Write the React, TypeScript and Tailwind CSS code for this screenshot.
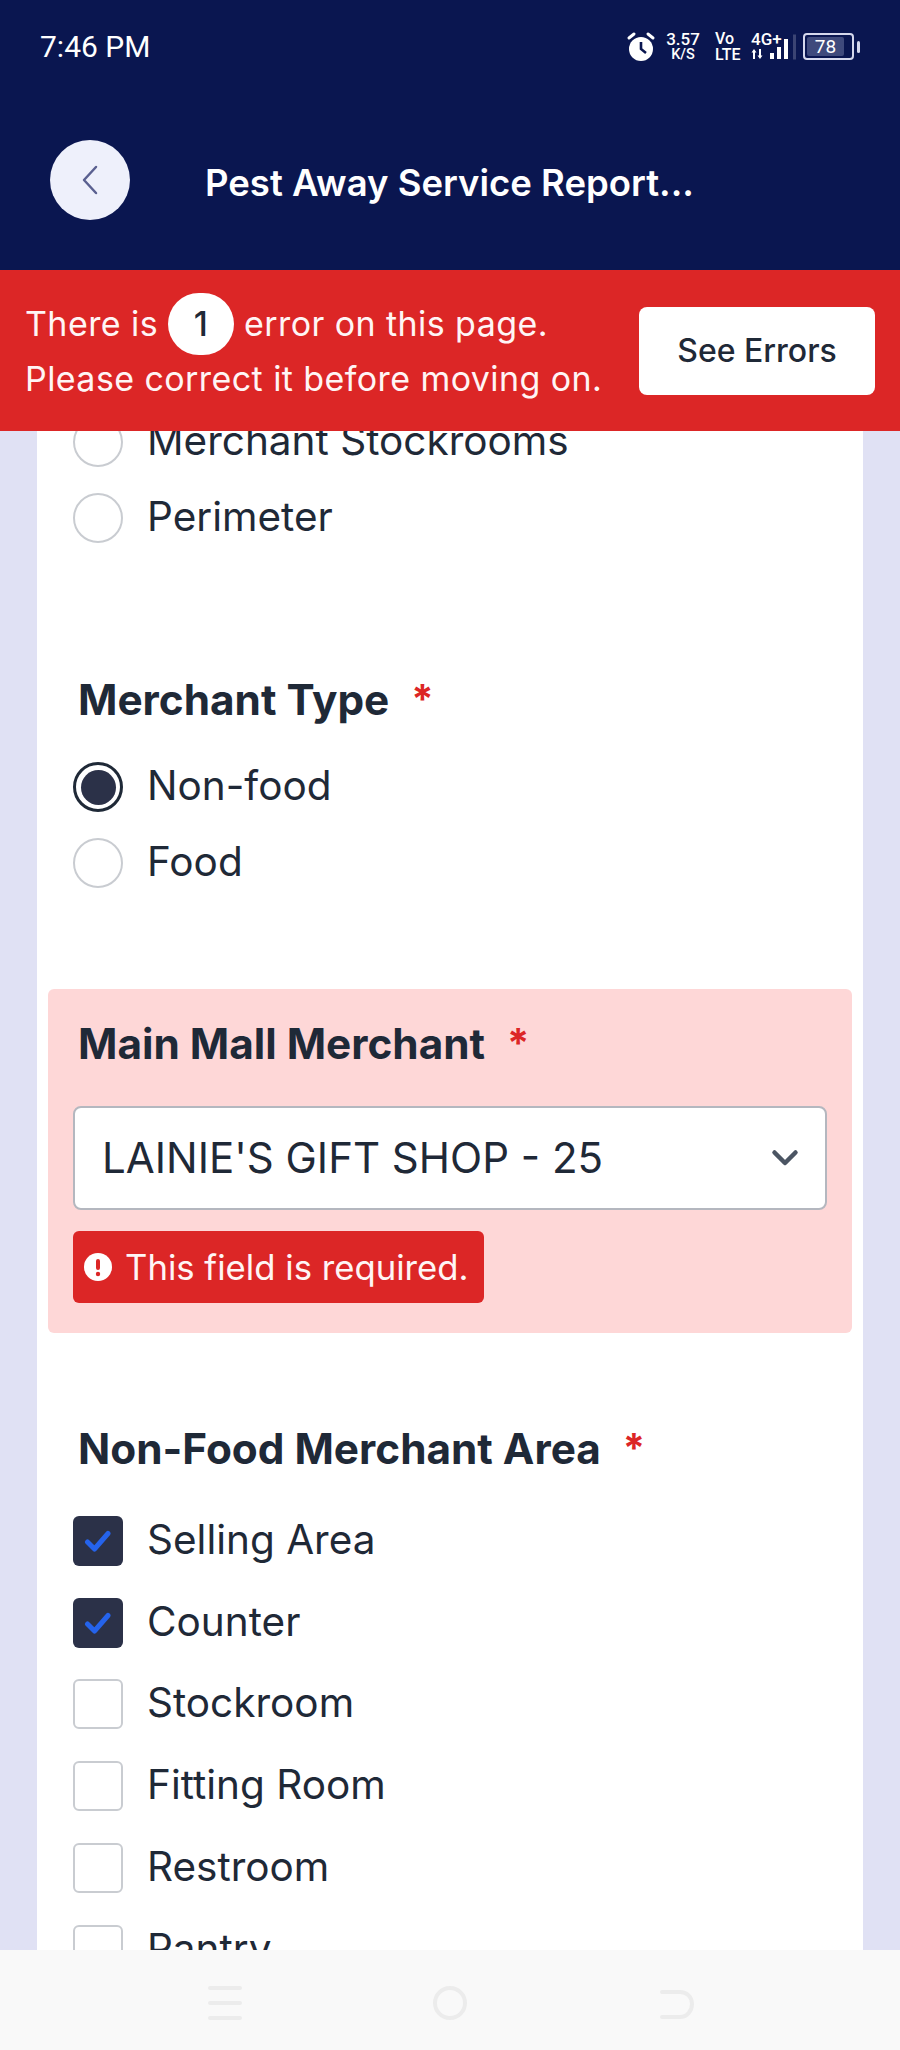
const RADIOS_TOP = ["Merchant Stockrooms", "Perimeter"];
const AREAS = [
  { label: "Selling Area", checked: true },
  { label: "Counter", checked: true },
  { label: "Stockroom", checked: false },
  { label: "Fitting Room", checked: false },
  { label: "Restroom", checked: false },
  { label: "Pantry", checked: false },
];

function Radio({ label, checked = false }: { label: string; checked?: boolean }) {
  return (
    <div className="flex h-[76px] items-center">
      {checked ? (
        <span className="flex h-[50px] w-[50px] items-center justify-center rounded-full border-[3px] border-[#1f2937] bg-white">
          <span className="h-[35px] w-[35px] rounded-full bg-[#2b3148]" />
        </span>
      ) : (
        <span className="h-[50px] w-[50px] rounded-full border-2 border-[#c9ccd1] bg-white" />
      )}
      <span className="ml-[24px] pb-[2px] text-[40.5px] leading-[60px] text-[#1f2937]">{label}</span>
    </div>
  );
}

function Check({ label, checked }: { label: string; checked: boolean }) {
  return (
    <div className="flex h-[81.75px] items-center">
      {checked ? (
        <span className="flex h-[50px] w-[50px] items-center justify-center rounded-[6px] bg-[#2b3148]">
          <svg width="28" height="24" viewBox="0 0 28 24" fill="none">
            <path d="M3.5 13 L10.5 20 L24 4.5" stroke="#2563eb" strokeWidth="5" strokeLinecap="round" strokeLinejoin="round" />
          </svg>
        </span>
      ) : (
        <span className="h-[50px] w-[50px] rounded-[6px] border-2 border-[#c9ccd1] bg-white" />
      )}
      <span className="ml-[24px] pb-[2px] text-[40.5px] leading-[60px] text-[#1f2937]">{label}</span>
    </div>
  );
}

function FieldLabel({ text }: { text: string }) {
  return (
    <div className="flex h-[60px] items-center text-[42.3px] font-bold leading-[60px] text-[#1f2937]">
      {text}
      <span className="ml-[22px] -translate-y-[1px] text-[40px] text-[#dc2626]">*</span>
    </div>
  );
}

function StatusBar() {
  return (
    <div className="flex h-[92px] items-center justify-between pl-[40px] pr-[40px] pt-[1px] font-['Roboto',sans-serif] text-white">
      <span className="text-[30px] leading-none">7:46 PM</span>
      <div className="flex items-center">
        <svg width="30" height="32" viewBox="0 0 30 32" fill="none">
          <circle cx="15" cy="18" r="12" fill="#fff" />
          <path d="M15 11 V18 L20 22" stroke="#0a1650" strokeWidth="2.6" fill="none" />
          <path d="M3 7 L8 3 M27 7 L22 3" stroke="#fff" strokeWidth="3" strokeLinecap="round" />
        </svg>
        <div className="ml-[11px] flex w-[32px] flex-col items-center text-[17px] font-medium leading-[16px]">
          <span>3.57</span>
          <span className="text-[14.5px]">K/S</span>
        </div>
        <div className="ml-[16px] flex w-[24px] flex-col items-start text-[16px] font-medium leading-[16px]">
          <span>Vo</span>
          <span>LTE</span>
        </div>
        <div className="relative ml-[12px] h-[36px] w-[42px]">
          <span className="absolute left-0 top-[1px] text-[17px] font-medium leading-[18px]">4G+</span>
          <svg className="absolute left-0 top-0" width="42" height="36" viewBox="0 0 42 36" fill="#fff">
            <path d="M3 20 L5.5 23.5 H4 V30 H2 V23.5 H0.5 Z" />
            <path d="M8 20 H10 V26.5 H11.5 L9 30 L6.5 26.5 H8 Z" />
            <rect x="19" y="24" width="4" height="6" />
            <rect x="26" y="18" width="4" height="12" />
            <rect x="33" y="10" width="4" height="20" />
          </svg>
        </div>
        <span className="h-[25px] w-[3px] translate-y-[0.5px] bg-[#3b4473]" />
        <div className="ml-[7px] flex h-[27px] w-[51px] items-center rounded-[4px] border-2 border-[#d5d8ec] p-[2px]">
          <span className="flex h-full w-[37px] items-center justify-center rounded-[2px] bg-[#3f4a7c] text-[19px] leading-none">78</span>
        </div>
        <span className="ml-[3px] h-[12px] w-[3px] rounded-sm bg-[#d5d8ec]" />
      </div>
    </div>
  );
}

export default function App() {
  return (
    <div className="flex h-[2050px] w-[900px] flex-col overflow-hidden bg-[#e0e1f4] font-['Inter',sans-serif]">
      <header className="h-[270px] shrink-0 bg-[#0a1650]">
        <StatusBar />
        <div className="mt-[48px] flex items-center pl-[50px]">
          <button type="button" className="flex h-[80px] w-[80px] items-center justify-center rounded-full bg-[#eef0fb]">
            <svg width="20" height="32" viewBox="0 0 20 32" fill="none">
              <path d="M16 3 L4 16 L16 29" stroke="#5a6090" strokeWidth="2.5" strokeLinecap="round" strokeLinejoin="round" />
            </svg>
          </button>
          <h1 className="ml-[75px] mt-[7px] whitespace-nowrap text-[36.5px] font-semibold leading-none text-white">Pest Away Service Report...</h1>
        </div>
      </header>

      <div className="flex h-[161px] shrink-0 items-center justify-between bg-[#dc2626] pl-[25px] pr-[25px]">
        <div className="-mt-[2px] text-[34px] tracking-[0.42px] text-[#fff5f5]">
          <div className="flex h-[62px] items-center">
            There is
            <span className="mx-[10px] flex h-[62px] w-[66px] items-center justify-center rounded-full bg-white font-medium text-[#1f2937]">1</span>
            error on this page.
          </div>
          <div className="mt-[-4px] h-[56px] leading-[56px]">Please correct it before moving on.</div>
        </div>
        <button type="button" className="flex h-[88px] w-[236px] items-center justify-center rounded-[8px] bg-white text-[32px] font-medium text-[#1f2937]">
          See Errors
        </button>
      </div>

      <main className="min-h-0 flex-1 overflow-hidden px-[37px]">
        <div className="-mt-[27px] bg-white pb-[40px]">
          <div className="px-[36px]">
            {RADIOS_TOP.map((label) => (
              <Radio key={label} label={label} />
            ))}
          </div>

          <div className="mt-[114px] pl-[41px] pr-[42px]">
            <FieldLabel text="Merchant Type" />
          </div>
          <div className="mt-[19px] px-[36px]">
            <Radio label="Non-food" checked />
            <Radio label="Food" />
          </div>

          <section className="mx-[11px] mt-[88px] rounded-[6px] bg-[#fed7d7] pb-[30px] pl-[25px] pr-[25px] pt-[25px]">
            <div className="pl-[5px]">
              <FieldLabel text="Main Mall Merchant" />
            </div>
            <div className="mt-[32px] flex h-[104px] items-center justify-between rounded-[8px] border-2 border-[#b4b7bf] bg-white pl-[27px] pr-[26px]">
              <span className="text-[42px] leading-none text-[#1f2937]">LAINIE'S GIFT SHOP - 25</span>
              <svg width="28" height="18" viewBox="0 0 28 18" fill="none">
                <path d="M3.5 3.5 L14 14 L24.5 3.5" stroke="#4b5563" strokeWidth="4.5" strokeLinecap="round" strokeLinejoin="round" />
              </svg>
            </div>
            <div className="mt-[21px] inline-flex h-[72px] w-[411px] items-center rounded-[6px] bg-[#dc2626] pl-[11px] align-top text-[34.7px] text-[#fff5f5]">
              <svg width="28" height="28" viewBox="0 0 28 28">
                <circle cx="14" cy="14" r="14" fill="#fff" />
                <rect x="12" y="6" width="4" height="11" rx="2" fill="#dc2626" />
                <circle cx="14" cy="21" r="2.2" fill="#dc2626" />
              </svg>
              <span className="ml-[13px]">This field is required.</span>
            </div>
          </section>

          <div className="mt-[86px] pl-[41px] pr-[42px]">
            <FieldLabel text="Non-Food Merchant Area" />
          </div>
          <div className="mt-[21px] px-[36px]">
            {AREAS.map((area) => (
              <Check key={area.label} label={area.label} checked={area.checked} />
            ))}
          </div>
        </div>
      </main>

      <nav className="flex h-[100px] shrink-0 items-center bg-[#f9f9f9] pt-[6px]">
        <div className="ml-[208px] flex h-[34px] w-[34px] flex-col justify-between">
          <span className="h-[4px] rounded-sm bg-[#ececec]" />
          <span className="h-[4px] rounded-sm bg-[#ececec]" />
          <span className="h-[4px] rounded-sm bg-[#ececec]" />
        </div>
        <span className="ml-[191px] h-[34px] w-[34px] rounded-full border-4 border-[#ececec]" />
        <svg className="ml-[193px]" width="36" height="34" viewBox="0 0 36 34" fill="none">
          <path d="M2 6 H20 C27 6 32 11 32 18 C32 25 27 31 20 31 H2" stroke="#ececec" strokeWidth="4" strokeLinecap="round" />
        </svg>
      </nav>
    </div>
  );
}
